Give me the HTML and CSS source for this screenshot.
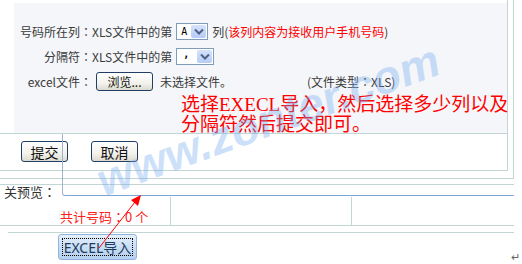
FILE: index.html
```html
<!DOCTYPE html>
<html>
<head>
<meta charset="utf-8">
<link rel="stylesheet" href="styles.css">
</head>
<body>
<div class="page">
  <div class="outer">
    <div class="inner">
      <div class="top">
        <div class="panel">
          <div class="row">
            <span class="lbl">号码所在列<span class="co">：</span></span>
            <span>XLS文件中的第</span>
            <span class="sel sel-a"><span class="val">A</span><span class="dd"><svg width="10" height="7" viewBox="0 0 10 7"><path d="M1 1.5 L5 5.5 L9 1.5" fill="none" stroke="#4d6185" stroke-width="2"/></svg></span></span>
            <span>列(<span class="red">该列内容为接收用户手机号码</span>)</span>
          </div>
          <div class="row">
            <span class="lbl">分隔符<span class="co">：</span></span>
            <span>XLS文件中的第</span>
            <span class="sel sel-b"><span class="val">,</span><span class="dd"><svg width="10" height="7" viewBox="0 0 10 7"><path d="M1 1.5 L5 5.5 L9 1.5" fill="none" stroke="#4d6185" stroke-width="2"/></svg></span></span>
          </div>
          <div class="row">
            <span class="lbl">excel文件<span class="co">：</span></span>
            <span class="xpbtn browse">浏览...</span>
            <span class="nofile">未选择文件。</span>
            <span class="ftype">(文件类型<span class="co">：</span>XLS)</span>
          </div>
          <div class="note">选择EXECL导入，然后选择多少列以及<br>分隔符然后提交即可。</div>
        </div>
      </div>
      <div class="btnrow">
        <span class="xpbtn act">提交</span>
        <span class="xpbtn act">取消</span>
      </div>
    </div>
  </div>
  <div class="line184"></div>
  <div class="preview"><span class="plabel">关预览<span class="co">：</span></span></div>
  <div class="trow">
    <div class="c1"><span class="count">共计号码<span class="co">：</span>0 个</span></div>
    <div class="c2"></div>
    <div class="c3"></div>
  </div>
  <div class="line231"></div>
  <div class="bottom">
    <span class="impbtn"><span class="focus">EXCEL导入</span></span>
    <span class="ret">↵</span>
  </div>

  <div class="tbox"></div>
  <div class="wm">www.zonter.com</div>
  <svg class="arrow" width="522" height="264" viewBox="0 0 522 264">
    <line x1="99" y1="248" x2="135" y2="202" stroke="#ff0000" stroke-width="1"/>
    <path d="M141 195 L131 200 L138 206 Z" fill="#ff0000"/>
  </svg>
</div>
</body>
</html>
```

FILE: styles.css
```css
html, body {
  margin: 0;
  padding: 0;
  background: #ffffff;
}
body {
  font-family: "Noto Sans CJK SC", "Noto Sans", sans-serif;
  font-size: 12px;
  color: #3a3a3a;
}
.co {
  font-family: "Noto Sans CJK JP", "Noto Sans CJK TC", sans-serif;
}
.page {
  position: relative;
  width: 522px;
  height: 264px;
  overflow: hidden;
}
.outer {
  width: 513px;
  height: 178px;
  border-right: 1px solid #c3d6d6;
  border-bottom: 1px solid #c3d6d6;
}
.inner {
  width: 507px;
  height: 170px;
  border-right: 1px solid #c3d6d6;
  border-bottom: 1px solid #c3d6d6;
}
.top {
  height: 134px;
  border-bottom: 1px solid #c3d6d6;
  box-sizing: border-box;
  padding-top: 3px;
}
.panel {
  margin-left: 14px;
  height: 130px;
  background: #f4f6f9;
  padding-top: 16px;
  box-sizing: border-box;
}
.row {
  display: flex;
  align-items: center;
  height: 25px;
  white-space: nowrap;
}
.lbl {
  width: 78px;
  text-align: right;
}
.red { color: #ff0000; }
.sel {
  display: flex;
  align-items: stretch;
  height: 17px;
  box-sizing: border-box;
  border: 1px solid #7f9db9;
  background: #fff;
  margin: 0 4px;
  padding: 1px;
}
.sel-a { width: 32px; }
.sel-b { width: 38px; }
.val {
  flex: 1;
  font-family: "DejaVu Sans Mono", monospace;
  font-size: 10px;
  line-height: 13px;
  padding-left: 3px;
  color: #000;
}
.sel-b .val { padding-left: 5px; line-height: 10px; font-weight: bold; }
.dd {
  width: 15px;
  background: linear-gradient(#d6e2fb, #b6cbf7);
  border-radius: 2px;
  display: flex;
  align-items: center;
  justify-content: center;
}
.xpbtn {
  display: inline-flex;
  align-items: center;
  justify-content: center;
  box-sizing: border-box;
  border: 1px solid #1f3f64;
  border-radius: 3px;
  background: linear-gradient(#ffffff, #f3f2ec 60%, #dcdad0);
  color: #111;
}
.browse {
  width: 57px;
  height: 19px;
  margin-left: 4px;
  font-size: 12px;
}
.nofile { margin-left: 7px; }
.ftype { margin-left: 75px; }
.note {
  margin-left: 167px;
  margin-top: 1px;
  color: #ff0000;
  font-family: "Liberation Serif", "Noto Sans CJK SC", serif;
  font-size: 19px;
  line-height: 20px;
  white-space: nowrap;
}
.btnrow {
  display: flex;
  gap: 23px;
  padding: 7px 0 0 21px;
}
.act {
  width: 47px;
  height: 21px;
  font-size: 14px;
}
.line184 {
  width: 514px;
  height: 5px;
  border-bottom: 1px solid #c3d6d6;
}
.preview {
  height: 11px;
}
.plabel {
  display: block;
  margin-left: 4px;
  margin-top: 1px;
  font-size: 13px;
  line-height: 12px;
  color: #333;
}
.trow {
  display: flex;
  width: 514px;
  height: 28px;
  border-bottom: 1px solid #c3d6d6;
}
.c1 {
  width: 170px;
  display: flex;
  align-items: flex-end;
}
.c2 {
  width: 180px;
  border-left: 1px solid #c3d6d6;
}
.c3 {
  flex: 1;
  border-left: 1px solid #c3d6d6;
}
.count {
  margin-left: 60px;
  color: #ff2020;
  font-size: 13px;
  line-height: 14px;
  margin-bottom: 1px;
}
.line231 {
  margin-left: 8px;
  width: 506px;
  height: 6px;
  border-bottom: 1px solid #c3d6d6;
}
.bottom {
  display: flex;
  align-items: flex-start;
  padding-top: 1px;
}
.impbtn {
  margin-left: 58px;
  width: 79px;
  height: 26px;
  box-sizing: border-box;
  border: 1px solid #8fb4dd;
  border-radius: 3px;
  background: linear-gradient(#e6f0fb, #c9def4 50%, #b4d0ef);
  padding: 3px;
  display: flex;
}
.focus {
  flex: 1;
  border: 1px dotted #000;
  display: flex;
  align-items: center;
  justify-content: center;
  font-family: "Noto Sans", "Noto Sans CJK SC", sans-serif;
  font-size: 14px;
  color: #1e3a5c;
}
.ret {
  margin-left: auto;
  margin-right: 2px;
  margin-top: 17px;
  font-size: 11px;
  color: #666;
  line-height: 11px;
}
.tbox {
  position: absolute;
  left: 62px;
  top: 134px;
  width: 451px;
  height: 61px;
  border-left: 1px solid #9cb3c8;
  border-bottom: 1px solid #7ea4d6;
  border-bottom-left-radius: 3px;
}
.wm {
  position: absolute;
  left: 268px;
  top: 120px;
  transform: translate(-50%, -50%) rotate(-20deg);
  font-family: "Liberation Sans", sans-serif;
  font-weight: bold;
  font-style: italic;
  font-size: 46px;
  color: rgba(110, 165, 240, 0.34);
  white-space: nowrap;
  pointer-events: none;
}
.arrow {
  position: absolute;
  left: 0;
  top: 0;
  pointer-events: none;
}
```
